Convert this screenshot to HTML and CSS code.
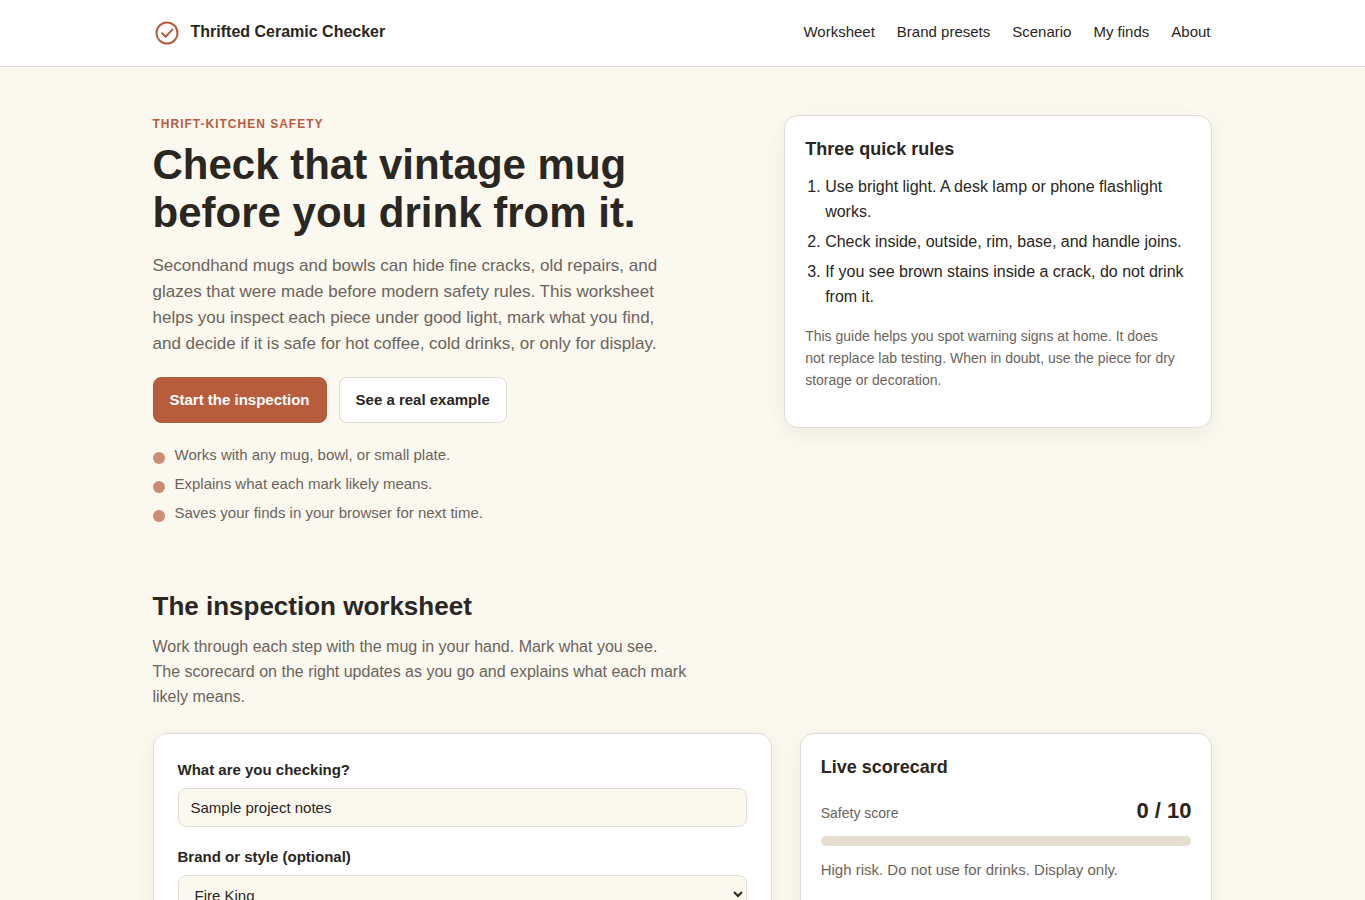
FILE: index.html
```html
<!DOCTYPE html>
<html lang="en">
<head>
  <meta charset="utf-8">
  <meta name="viewport" content="width=device-width, initial-scale=1">
  <title>Thrifted Ceramic Checker</title>
  <link rel="stylesheet" href="styles.css">
</head>
<body>
  <header class="site-header">
    <div class="container header-inner">
      <a class="brand" href="#top">
        <svg class="brand-icon" viewBox="0 0 28 28" fill="none" stroke="currentColor" stroke-width="2" aria-hidden="true">
          <circle cx="14" cy="14" r="10.5"/>
          <path d="M9 14.2l3.6 3.6 7-7.4" stroke-linecap="round" stroke-linejoin="round"/>
        </svg>
        <span>Thrifted Ceramic Checker</span>
      </a>
      <nav class="site-nav">
        <a href="#worksheet">Worksheet</a>
        <a href="#presets">Brand presets</a>
        <a href="#scenario">Scenario</a>
        <a href="#finds">My finds</a>
        <a href="#about">About</a>
      </nav>
    </div>
  </header>

  <main id="top">
    <section class="container hero">
      <div class="hero-copy">
        <p class="eyebrow">Thrift-kitchen safety</p>
        <h1>Check that vintage mug before you drink from it.</h1>
        <p class="lead">Secondhand mugs and bowls can hide fine cracks, old repairs, and glazes that were made before modern safety rules. This worksheet helps you inspect each piece under good light, mark what you find, and decide if it is safe for hot coffee, cold drinks, or only for display.</p>
        <div class="hero-actions">
          <button type="button" class="btn btn-primary">Start the inspection</button>
          <button type="button" class="btn btn-secondary">See a real example</button>
        </div>
        <ul class="hero-points">
          <li>Works with any mug, bowl, or small plate.</li>
          <li>Explains what each mark likely means.</li>
          <li>Saves your finds in your browser for next time.</li>
        </ul>
      </div>
      <aside class="card rules-card">
        <h3>Three quick rules</h3>
        <ol>
          <li>Use bright light. A desk lamp or phone flashlight works.</li>
          <li>Check inside, outside, rim, base, and handle joins.</li>
          <li>If you see brown stains inside a crack, do not drink from it.</li>
        </ol>
        <p class="note">This guide helps you spot warning signs at home. It does not replace lab testing. When in doubt, use the piece for dry storage or decoration.</p>
      </aside>
    </section>

    <section class="container worksheet" id="worksheet">
      <h2>The inspection worksheet</h2>
      <p class="section-intro">Work through each step with the mug in your hand. Mark what you see. The scorecard on the right updates as you go and explains what each mark likely means.</p>
      <div class="worksheet-grid">
        <form class="card form-card">
          <div class="field">
            <label for="item">What are you checking?</label>
            <input type="text" id="item" value="Sample project notes">
          </div>
          <div class="field">
            <label for="brand">Brand or style (optional)</label>
            <select id="brand">
              <option>Fire King</option>
            </select>
          </div>
        </form>
        <aside class="card score-card">
          <h3>Live scorecard</h3>
          <div class="score-row">
            <span class="score-label">Safety score</span>
            <strong class="score-value">0 / 10</strong>
          </div>
          <div class="score-bar"></div>
          <p class="score-text">High risk. Do not use for drinks. Display only.</p>
        </aside>
      </div>
    </section>
  </main>
</body>
</html>
```
FILE: styles.css
```css
:root {
  --bg: #fbf8ef;
  --surface: #ffffff;
  --ink: #2a2622;
  --muted: #6b645c;
  --accent: #b85c3e;
  --line: #e0ddd6;
  --track: #e5ddcf;
}
* {
  box-sizing: border-box;
}
body {
  margin: 0;
  font-family: "Liberation Sans", Arial, sans-serif;
  font-size: 16px;
  line-height: 25px;
  color: var(--ink);
  background: var(--bg);
}
h1, h2, h3, p, ul, ol {
  margin: 0;
}
a {
  color: inherit;
  text-decoration: none;
}
.container {
  max-width: 1100px;
  margin: 0 auto;
  padding: 0 20px;
}

/* header */
.site-header {
  background: var(--surface);
  border-bottom: 1px solid var(--line);
}
.header-inner {
  display: flex;
  align-items: flex-start;
  justify-content: space-between;
  padding-top: 19px;
  padding-bottom: 19px;
}
.brand {
  display: flex;
  align-items: flex-start;
  gap: 10px;
  font-weight: bold;
}
.brand-icon {
  width: 28px;
  height: 28px;
  color: var(--accent);
}
.site-nav {
  display: flex;
  gap: 18px;
  font-size: 15px;
}
.site-nav a {
  padding: 0 2px;
}

/* hero */
.hero {
  display: grid;
  grid-template-columns: 1.4fr 1fr;
  gap: 32px;
  align-items: start;
  padding-top: 48px;
  padding-bottom: 64px;
}
.eyebrow {
  margin-bottom: 8px;
  font-size: 12px;
  line-height: 18px;
  font-weight: bold;
  letter-spacing: 1px;
  text-transform: uppercase;
  color: var(--accent);
}
h1 {
  margin-bottom: 16px;
  font-size: 42px;
  line-height: 48px;
}
.lead {
  max-width: 520px;
  margin-bottom: 20px;
  font-size: 17px;
  line-height: 26px;
  color: var(--muted);
}
.hero-actions {
  display: flex;
  gap: 12px;
  margin-bottom: 20px;
}
.btn {
  padding: 10px 16px;
  border: 1px solid var(--line);
  border-radius: 8px;
  font: bold 15px/24px "Liberation Sans", Arial, sans-serif;
  cursor: pointer;
}
.btn-primary {
  background: var(--accent);
  border-color: var(--accent);
  color: #fff;
}
.btn-secondary {
  background: var(--surface);
  color: var(--ink);
}
.hero-points {
  display: grid;
  gap: 5px;
  padding: 0;
  list-style: none;
  font-size: 15px;
  line-height: 24px;
  color: var(--muted);
}
.hero-points li {
  display: flex;
  gap: 10px;
}
.hero-points li::before {
  content: "";
  width: 12px;
  height: 12px;
  margin-top: 9px;
  border-radius: 50%;
  background: var(--accent);
  opacity: 0.7;
}

/* cards */
.card {
  background: var(--surface);
  border: 1px solid var(--line);
  border-radius: 14px;
  box-shadow: 0 6px 20px rgba(42, 38, 34, 0.06);
}
.card h3 {
  font-size: 18px;
  line-height: 27px;
}
.rules-card {
  padding: 20px;
}
.rules-card ol {
  margin: 11px 0 16px;
  padding-left: 20px;
}
.rules-card li {
  margin-bottom: 5px;
}
.note {
  max-width: 372px;
  margin-bottom: 16px;
  font-size: 14px;
  line-height: 22px;
  color: var(--muted);
}

/* worksheet */
.worksheet {
  padding-bottom: 48px;
}
h2 {
  margin-bottom: 11px;
  font-size: 26px;
  line-height: 34px;
}
.section-intro {
  max-width: 535px;
  margin-bottom: 24px;
  color: var(--muted);
}
.worksheet-grid {
  display: grid;
  grid-template-columns: 1.5fr 1fr;
  gap: 28px;
}
.form-card {
  padding: 24px;
}
.field {
  margin-bottom: 18px;
}
.field label {
  display: block;
  margin-bottom: 6px;
  font-size: 15px;
  line-height: 24px;
  font-weight: bold;
}
.field input,
.field select {
  display: block;
  width: 100%;
  height: 39px;
  padding: 10px 12px;
  border: 1px solid var(--line);
  border-radius: 8px;
  background: var(--bg);
  color: var(--ink);
  font-family: inherit;
  font-size: 15px;
}
.score-card {
  padding: 20px;
}
.score-row {
  display: flex;
  align-items: baseline;
  justify-content: space-between;
  margin: 13px 0 8px;
}
.score-label {
  font-size: 14px;
  color: var(--muted);
}
.score-value {
  font-size: 22px;
  line-height: 34px;
}
.score-bar {
  height: 10px;
  border-radius: 5px;
  background: var(--track);
}
.score-text {
  margin-top: 12px;
  font-size: 15px;
  line-height: 24px;
  color: var(--muted);
}
@media (max-width: 860px) {
  .hero,
  .worksheet-grid {
    grid-template-columns: 1fr;
  }
  .header-inner,
  .site-nav {
    flex-wrap: wrap;
  }
}
```
